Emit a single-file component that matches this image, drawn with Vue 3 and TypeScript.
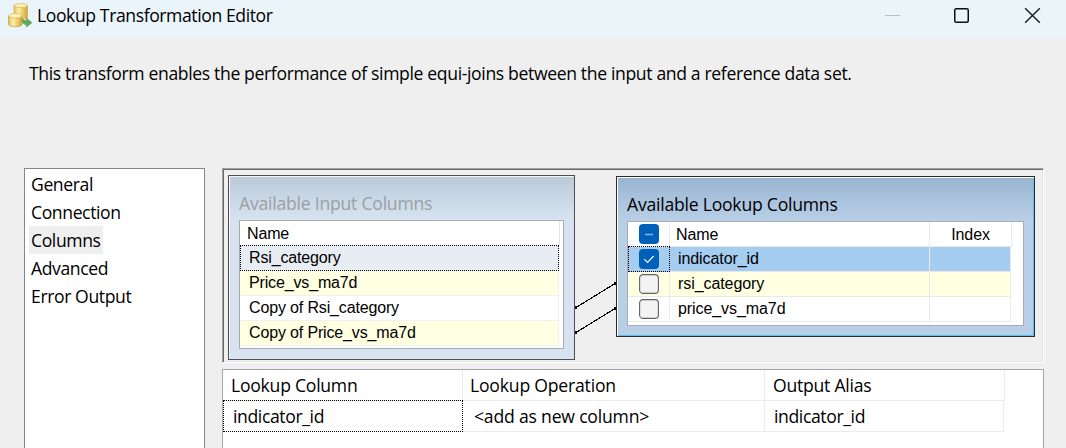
<script setup lang="ts">
interface LookupRow {
  name: string
  checked: boolean
}

const pages: string[] = ['General', 'Connection', 'Columns', 'Advanced', 'Error Output']
const activePage = 'Columns'
const inputColumns: string[] = ['Rsi_category', 'Price_vs_ma7d', 'Copy of Rsi_category', 'Copy of Price_vs_ma7d']
const lookupColumns: LookupRow[] = [
  { name: 'indicator_id', checked: true },
  { name: 'rsi_category', checked: false },
  { name: 'price_vs_ma7d', checked: false },
]
</script>

<template>
  <div class="window">
    <header class="titlebar">
      <svg class="app-icon" width="25" height="26" viewBox="0 0 25 26">
        <defs>
          <linearGradient id="gold" x1="0" x2="1" y1="0" y2="0">
            <stop offset="0" stop-color="#e0c05a" />
            <stop offset=".35" stop-color="#fcf0a4" />
            <stop offset="1" stop-color="#d3a52f" />
          </linearGradient>
        </defs>
        <path d="M6 2.500v12c0 2.400 13.500 2.400 13.500 0v-12z" fill="url(#gold)" stroke="#c9a956" stroke-width=".7" />
        <ellipse cx="12.750" cy="2.600" rx="6.750" ry="2" fill="#fbf0b5" stroke="#d3b866" stroke-width=".7" />
        <path d="M.5 13v8.500c0 2.800 13.500 2.800 13.500 0V13z" fill="url(#gold)" stroke="#c09c48" stroke-width=".7" />
        <ellipse cx="7.250" cy="12.800" rx="6.750" ry="2.200" fill="#fdf3b9" stroke="#d3b866" stroke-width=".7" />
        <path d="M14.500 15.800c.9 1.700 2.200 2.200 4 1.900v-2.500l5.300 4.500-5.300 4.200v-2.300c-3 .2-4.500-2-4-5.800z" fill="#62a956" stroke="#4b9145" stroke-width=".6" />
      </svg>
      <h1 class="ui title">Lookup Transformation Editor</h1>
      <svg class="controls" width="160" height="20" viewBox="0 0 160 20" fill="none">
        <path d="M0 8.500h15" stroke="#b9c1c5" />
        <rect x="69.750" y="1.750" width="13.500" height="13.500" rx="1.500" stroke="#0c0f10" stroke-width="1.500" />
        <path d="M140.200 1.200l14.600 14.600M154.800 1.200l-14.600 14.600" stroke="#15191b" stroke-width="1.400" />
      </svg>
    </header>
    <p class="ui description">This transform enables the performance of simple equi-joins between the input and a reference data set.</p>
    <main class="body">
      <nav class="pages">
        <div v-for="page in pages" :key="page" class="page">
          <span :class="['ui', 'page-label', { active: page === activePage }]">{{ page }}</span>
        </div>
      </nav>
      <div class="content">
        <section class="canvas">
          <div class="panel input-panel">
            <h2 class="ui panel-title">Available Input Columns</h2>
            <div class="list">
              <div class="head">Name</div>
              <div v-for="(name, i) in inputColumns" :key="name" :class="['row', { focused: i === 0, striped: i % 2 === 1 }]">{{ name }}</div>
            </div>
          </div>
          <div class="panel lookup-panel">
            <h2 class="ui panel-title">Available Lookup Columns</h2>
            <div class="list">
              <div class="lookup-head">
                <span class="cell check-cell">
                  <svg width="20" height="20" viewBox="0 0 20 20"><rect width="20" height="20" rx="4" fill="#005fb8" /><path d="M6 10.500h8" stroke="#86b5df" stroke-width="1.500" /></svg>
                </span>
                <span class="cell name-cell">Name</span>
                <span class="cell index-cell">Index</span>
              </div>
              <div v-for="(row, i) in lookupColumns" :key="row.name" :class="['lookup-row', { selected: row.checked, striped: i === 1 }]">
                <span class="cell check-cell">
                  <svg width="20" height="20" viewBox="0 0 20 20" fill="none">
                    <template v-if="row.checked">
                      <rect width="20" height="20" rx="4" fill="#005fb8" />
                      <path d="M5.300 10.200l3.200 3.300 6.200-6.500" stroke="#fff" stroke-width="1.100" />
                    </template>
                    <rect v-else x=".6" y=".6" width="18.800" height="18.800" rx="3.500" fill="#f3f3f3" stroke="#626262" stroke-width="1.100" />
                  </svg>
                </span>
                <span class="cell name-cell">{{ row.name }}</span>
                <span class="cell index-cell"></span>
              </div>
            </div>
          </div>
          <svg class="links" width="42" height="60" viewBox="0 0 42 60">
            <path d="M1 32.500L40 8.500M1 57.500L40 33.500" stroke="#000" stroke-width="1.100" shape-rendering="crispEdges" />
            <path d="M0 31h2v3h-2zM39 7h2v3h-2zM0 56h2v3h-2zM39 32h2v3h-2z" />
          </svg>
        </section>
        <section class="mapping">
          <div class="map-head">
            <span class="map-cell ui">Lookup Column</span>
            <span class="map-cell ui operation">Lookup Operation</span>
            <span class="map-cell ui">Output Alias</span>
          </div>
          <div class="map-row">
            <span class="map-cell ui current">indicator_id</span>
            <span class="map-cell ui operation">&lt;add as new column&gt;</span>
            <span class="map-cell ui alias">indicator_id</span>
          </div>
        </section>
      </div>
    </main>
  </div>
</template>

<style>
body { margin: 0; overflow: hidden; }
</style>

<style scoped>
* { box-sizing: border-box; }
.window { width: 1066px; height: 448px; overflow: hidden; background: #efefef; color: #000; display: flex; flex-direction: column; font: 16px "Liberation Sans", Arial, sans-serif; }
.ui { font-family: "Open Sans", "Noto Sans", sans-serif; font-size: 17.6px; font-weight: 400; white-space: nowrap; }
h1, h2, p { margin: 0; }
.titlebar { height: 38px; flex: none; background: linear-gradient(90deg, #eaf5fb, #e9f5f7); display: flex; align-items: flex-start; padding: 3px 21px 0 8px; }
.title { margin-left: 4px; line-height: 24px; letter-spacing: -0.41px; }
.controls { margin: 4px 0 0 auto; flex: none; }
.description { height: 130px; flex: none; padding: 23px 0 0 29px; line-height: 24px; letter-spacing: -0.36px; }
.body { display: flex; gap: 17px; padding-left: 24px; height: 280px; }
.pages { width: 181px; height: 300px; border: 1px solid #828790; background: #fff; padding: 1px 4px; }
.page { height: 28px; display: flex; }
.page-label { line-height: 26px; padding: 1px 2px; letter-spacing: -0.4px; }
.page-label.active { background: #efefef; }
.content { width: 822px; display: flex; flex-direction: column; gap: 6px; }
.canvas { position: relative; height: 195px; flex: none; border: 1px solid; border-color: #a0a0a0 #fff #fff #a0a0a0; box-shadow: inset 1px 1px #696969, inset -1px -1px #e3e3e3; display: flex; align-items: flex-start; gap: 41px; padding: 6px 0 0 5px; }
.panel { border: 1px solid #4b4f52; padding: 0 10px; }
.input-panel { width: 347px; height: 185px; letter-spacing: -0.15px; background: linear-gradient(#bacad9, #d7e3f1 44px); box-shadow: inset 1px 1px #f3f6f9; }
.lookup-panel { width: 419px; height: 161px; margin-top: 1px; letter-spacing: -0.08px; border-color: #282c31; background: linear-gradient(#99b4d1, #b9cfe8 44px); box-shadow: inset 1px 1px #fff, inset -1px -1px #50c4ed; }
.panel-title { height: 44px; line-height: 24px; padding-top: 15px; letter-spacing: -0.23px; }
.input-panel .panel-title { color: #9b9fa4; }
.list { border: 1px solid #a5acb2; background: #fff; }
.input-panel .list { height: 129px; }
.lookup-panel .list { height: 105px; }
.head { height: 25px; line-height: 25px; padding-left: 7px; border-right: 1px solid #e5e5e5; width: 320px; }
.row { width: 319px; height: 25px; line-height: 24px; padding-left: 9px; border: solid #f0f0f0; border-width: 0 1px 1px 0; }
.striped { background: #ffffe1; }
.focused { height: 26px; margin-top: -1px; border: 1px dotted #000; padding-left: 8px; background: #e7edf2; }
.lookup-head, .lookup-row { display: grid; grid-template-columns: 42px 260px 81px; height: 25px; width: 383px; }
.lookup-head { grid-template-columns: 42px 260px 82px; width: 384px; }
.cell { border: solid #e9e9e9; border-width: 0 1px 1px 0; line-height: 24px; display: block; height: 25px; }
.check-cell { padding: 2px 0 0 11px; }
.check-cell svg { display: block; }
.name-cell { padding-left: 8px; }
.lookup-head .name-cell, .lookup-head .index-cell { line-height: 23px; padding-top: 1px; }
.lookup-head .name-cell { padding-left: 6px; }
.lookup-head .index-cell { text-align: center; }
.selected { background: #a4cdf0; }
.selected .check-cell { height: 26px; border: 1px dotted #000; margin-top: -1px; padding: 2px 0 0 10px; }
.links { position: absolute; left: 352px; top: 106px; }
.mapping { height: 90px; flex: none; background: #fff; border: 1px solid #a4a5ad; }
.map-head, .map-row { display: grid; grid-template-columns: 240px 302px 240px; height: 31px; width: 782px; }
.map-row { grid-template-columns: 240px 302px 239px; width: 781px; }
.map-cell { height: 31px; border: solid #ebebeb; border-width: 0 1px 1px 0; line-height: 30px; padding-left: 8px; letter-spacing: -0.25px; }
.map-cell.operation { padding-left: 7px; letter-spacing: -0.2px; }
.map-row .map-cell { line-height: 30px; padding-left: 9px; letter-spacing: -0.38px; }
.map-row .map-cell.operation { padding-left: 11px; letter-spacing: -0.2px; }
.map-row .map-cell.current { height: 32px; border: 1px dotted #000; margin-top: -1px; }
</style>
